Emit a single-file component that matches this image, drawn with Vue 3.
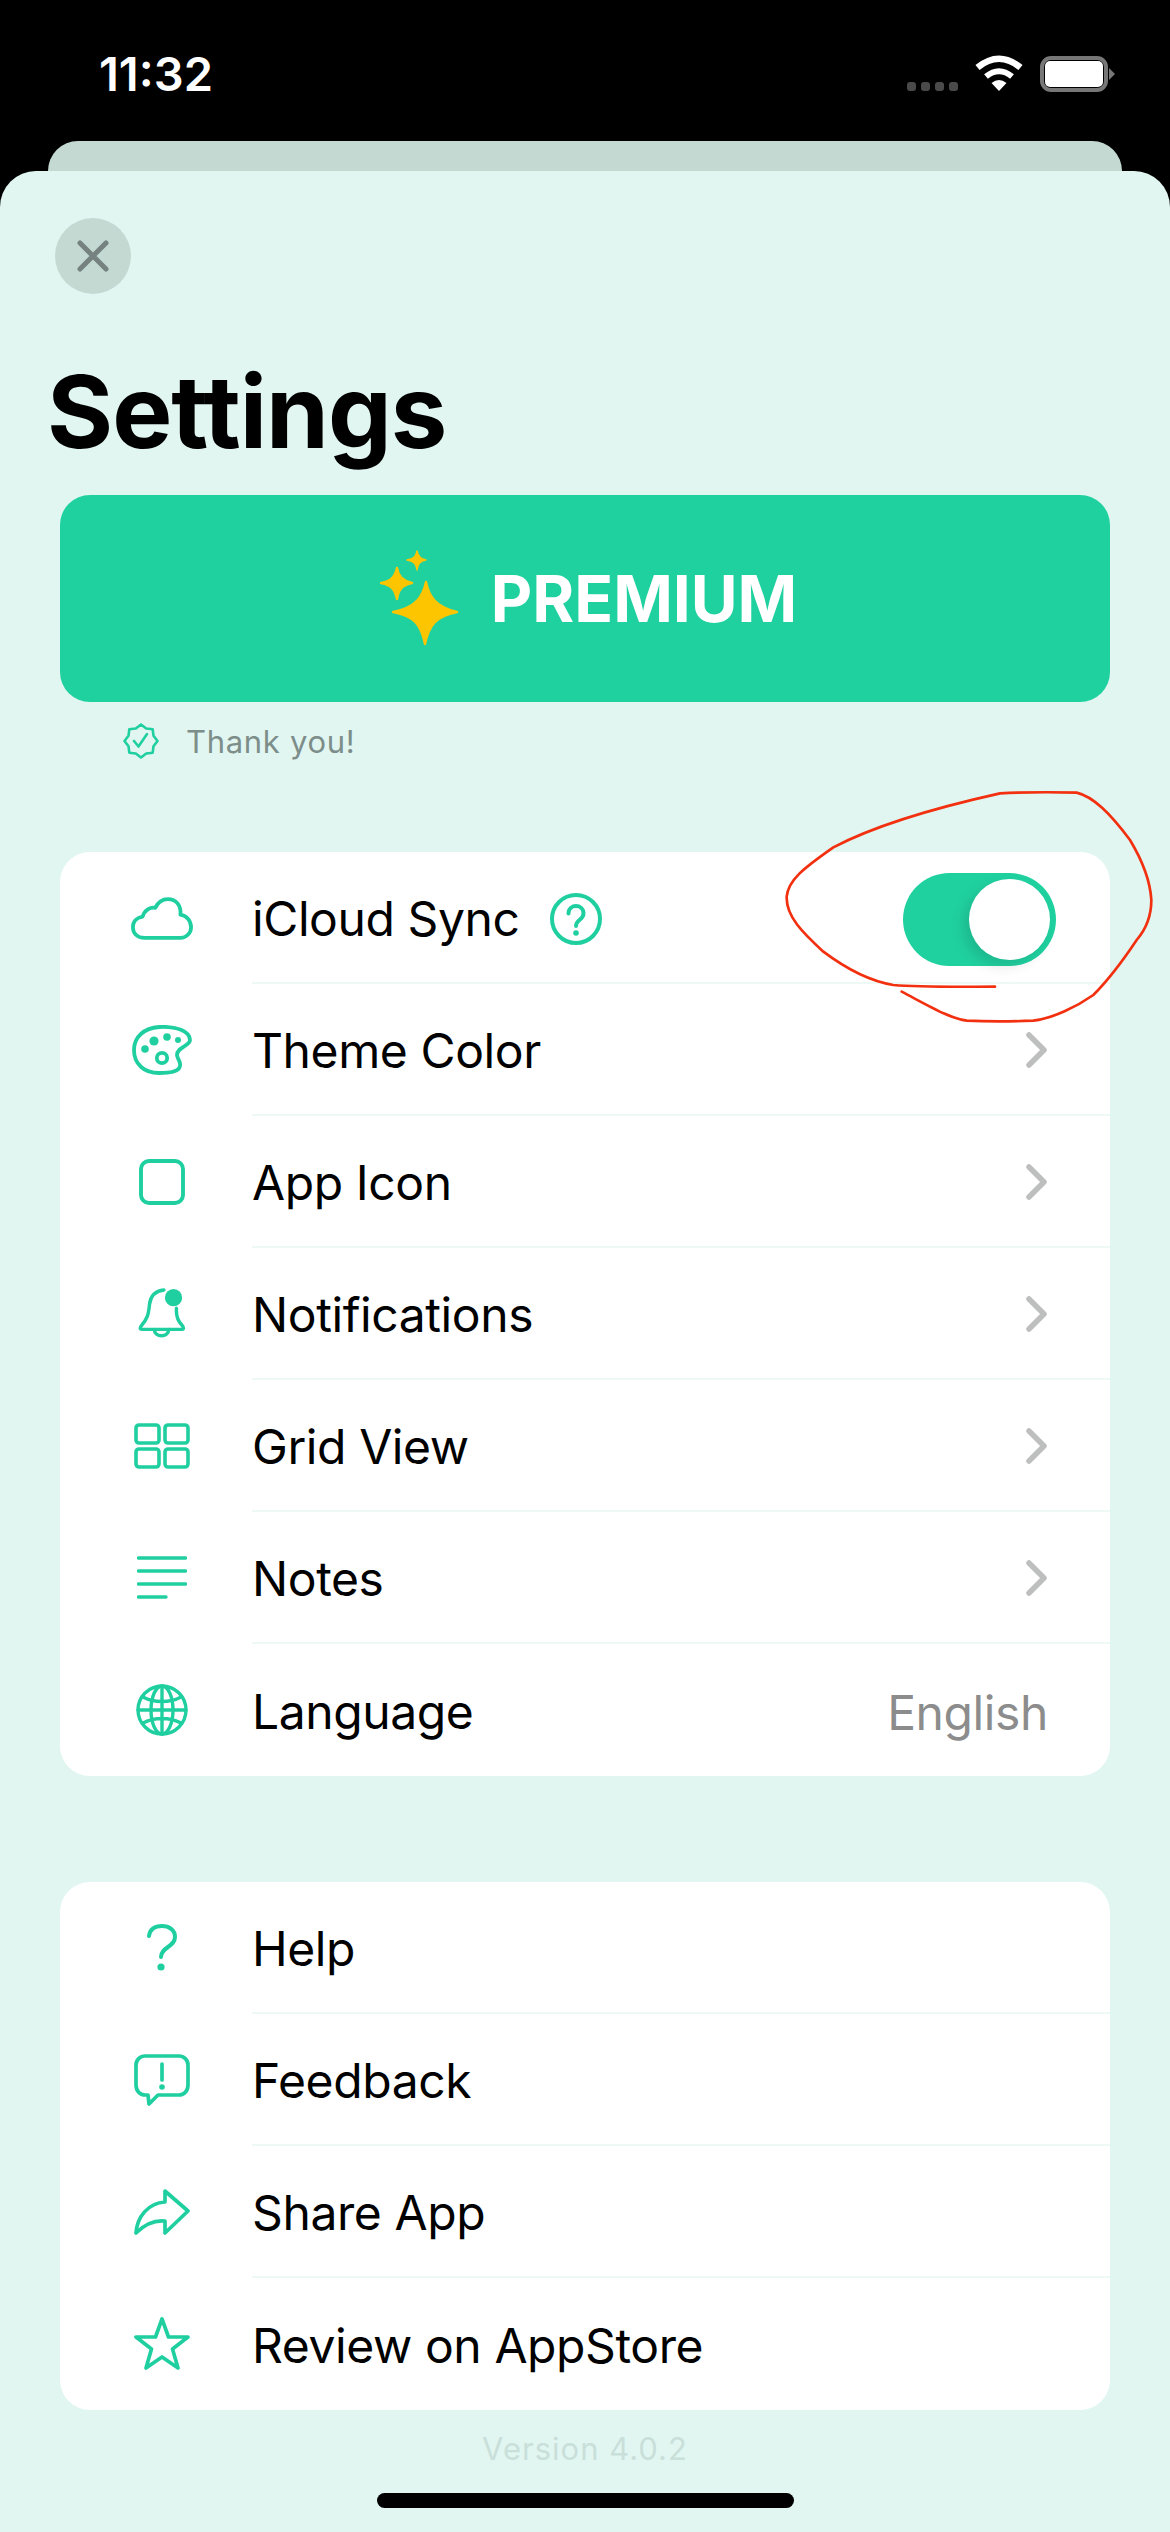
<template>
  <div class="phone">
    <div class="status-bar">
      <span class="clock">11:32</span>
      <div class="status-icons">
        <div class="signal"><i v-for="n in 4" :key="n"></i></div>
        <svg class="wifi" viewBox="0 0 48 36" fill="none">
          <path d="M2.5 12.5 Q24 -5 45.5 12.5" stroke="#fff" stroke-width="6.5" />
          <path d="M11 21.5 Q24 11 37 21.5" stroke="#fff" stroke-width="6" />
          <path d="M24 36 L16.5 28 Q24 22 31.5 28 Z" fill="#fff" />
        </svg>
        <div class="battery"><div class="battery-fill"></div></div>
      </div>
    </div>
    <div class="back-card"></div>

    <div class="sheet">
      <button class="close-btn">
        <svg viewBox="0 0 34 34" width="34" height="34">
          <path d="M4 4 L30 30 M30 4 L4 30" stroke="#75827f" stroke-width="5" stroke-linecap="round" fill="none" />
        </svg>
      </button>
      <h1 class="title">Settings</h1>

      <div class="premium">
        <svg class="sparkles" viewBox="0 0 84 98" fill="#fdc500" stroke="#fdc500" stroke-width="2.4" stroke-linejoin="round">
          <path d="M47 33 C50 48 57 58 78 63 C57 67 50 76 46 95 C42 76 36 67 14 63 C36 59 44 48 47 33 Z" />
          <path d="M18 19 C19 27 23 32 33 34 C23 36 19 41 18 50 C16 41 13 36 2 34 C13 32 16 27 18 19 Z" />
          <path d="M38 2 C39 7 41 10 47 11 C41 12 39 15 38 21 C37 15 35 12 28 11 C35 10 37 7 38 2 Z" stroke-width="1.4" />
        </svg>
        <span>PREMIUM</span>
      </div>

      <div class="thanks">
        <svg class="badge" viewBox="0 0 36 36" fill="none" stroke="#20cfa0" stroke-width="2.6" stroke-linejoin="round" stroke-linecap="round">
          <path d="M18 1.5 L23.2 5.5 L29.7 6.3 L30.5 12.8 L34.5 18 L30.5 23.2 L29.7 29.7 L23.2 30.5 L18 34.5 L12.8 30.5 L6.3 29.7 L5.5 23.2 L1.5 18 L5.5 12.8 L6.3 6.3 L12.8 5.5 Z" />
          <path d="M11 18 L15.5 23.5 L24 11" />
        </svg>
        <span>Thank you!</span>
      </div>

      <div class="card first">
        <div v-for="row in mainRows" :key="row.label" class="row">
          <div class="row-icon" v-html="row.icon"></div>
          <div class="row-body">
            <span class="row-label">{{ row.label }}</span>
            <svg v-if="row.help" class="help" viewBox="0 0 52 52" fill="none">
              <circle cx="26" cy="26" r="24" stroke="#20cfa0" stroke-width="4" />
              <path d="M18.5 20.5 C18.5 10.5 33.5 10.5 33.5 20.5 C33.5 27 26 26.5 26 33" stroke="#20cfa0" stroke-width="4" stroke-linecap="round" />
              <circle cx="26" cy="40" r="2.8" fill="#20cfa0" />
            </svg>
            <div v-if="row.toggle" class="toggle"><div class="knob"></div></div>
            <span v-else-if="row.value" class="row-value">{{ row.value }}</span>
            <svg v-else-if="row.chevron" class="chevron" viewBox="0 0 24 36" fill="none">
              <path d="M5 3 L20 18 L5 33" stroke="#bdbfbe" stroke-width="5.5" stroke-linecap="round" stroke-linejoin="round" />
            </svg>
          </div>
        </div>
      </div>

      <div class="card second">
        <div v-for="row in otherRows" :key="row.label" class="row">
          <div class="row-icon" v-html="row.icon"></div>
          <div class="row-body">
            <span class="row-label">{{ row.label }}</span>
          </div>
        </div>
      </div>

      <div class="version">Version 4.0.2</div>
      <div class="home-bar"></div>
    </div>

    <!-- hand drawn marker round the toggle -->
    <svg class="scribble" viewBox="0 0 1230 810" fill="none">
      <path d="M705 650 C600 650 480 652 400 645 C320 632 250 590 190 545 C130 490 78 440 80 380 C85 330 130 295 220 232 C300 190 450 130 720 70 C800 66 880 66 950 68 C1000 80 1050 130 1110 210 C1140 260 1170 320 1174 390 C1174 440 1160 475 1130 510 C1090 570 1050 625 1000 675 C950 710 880 745 820 752 C750 755 680 755 620 752 C570 745 520 715 425 665" stroke="#f2300f" stroke-width="8" stroke-linecap="round" stroke-linejoin="round" />
    </svg>
  </div>
</template>

<script setup>
const g = 'fill="none" stroke="#20cfa0" stroke-linecap="round" stroke-linejoin="round"'

const icons = {
  cloud: `<svg width="62" height="43" viewBox="0 0 64 44" ${g} stroke-width="3.9"><path d="M14 42 C6 42 2 37 2 31 C2 25 6 21 12 20 C14 13 20 10 25 11 C28 5 33 2 38 2 C47 2 52 9 51 18 C58 19 62 25 62 31 C62 37 57 42 51 42 Z"/></svg>`,
  palette: `<svg width="60" height="50" viewBox="0 0 60 50" ${g} stroke-width="3.8"><path d="M27 2 C44 1 58 6 58 15 C58 21 45 22 45 30 C45 34 49 36 48 41 C47 47 38 48 27 48 C12 48 2 39 2 25 C2 12 12 3 27 2 Z"/><circle cx="30" cy="33" r="5.2"/><circle cx="22" cy="16" r="4.6" fill="#20cfa0" stroke="none"/><circle cx="35" cy="12" r="3.8" fill="#20cfa0" stroke="none"/><circle cx="46" cy="15" r="3" fill="#20cfa0" stroke="none"/><circle cx="13" cy="24" r="3.8" fill="#20cfa0" stroke="none"/></svg>`,
  square: `<svg width="46" height="46" viewBox="0 0 46 46" ${g} stroke-width="3.9"><rect x="2" y="2" width="42" height="42" rx="8"/></svg>`,
  bell: `<svg width="48" height="52" viewBox="0 0 50 54" ${g} stroke-width="3.6"><path d="M27 2 C18 3 13 8 12 17 C11 27 10 32 3 40 C2 42 2 43 4 43 L45 43 C48 43 48 41 46 39 C41 34 40 28 40 24 L40 21"/><path d="M17 43 C17 52 32 52 32 43"/><circle cx="37" cy="10" r="9" fill="#20cfa0" stroke="none"/></svg>`,
  grid: `<svg width="56" height="46" viewBox="0 0 56 46" ${g} stroke-width="3.6"><rect x="2" y="2" width="23" height="18" rx="3"/><rect x="31" y="2" width="23" height="18" rx="3"/><rect x="2" y="26" width="23" height="18" rx="3"/><rect x="31" y="26" width="23" height="18" rx="3"/></svg>`,
  notes: `<svg width="50" height="44" viewBox="0 0 50 44" ${g} stroke-width="3.4"><path d="M1.5 2 H48.5 M1.5 15 H48.5 M1.5 28 H48.5 M1.5 41 H29"/></svg>`,
  globe: `<svg width="52" height="52" viewBox="0 0 52 52" ${g} stroke-width="3.4"><circle cx="26" cy="26" r="24"/><ellipse cx="26" cy="26" rx="11" ry="24"/><path d="M26 2 V50 M2 26 H50 M7 13 C18 19 34 19 45 13 M7 39 C18 33 34 33 45 39"/></svg>`,
  question: `<svg width="30" height="48" viewBox="0 0 30 48" ${g} stroke-width="4"><path d="M2 12 C3 5 8 2 15 2 C22 2 28 6 28 13 C28 23 14 23 14 33"/><circle cx="14" cy="43" r="3.6" fill="#20cfa0" stroke="none"/></svg>`,
  feedback: `<svg width="56" height="52" viewBox="0 0 56 52" ${g} stroke-width="3.7"><path d="M11 2 H45 C50 2 54 6 54 11 V31 C54 37 50 41 45 41 H24 L15 50 L14 41 H11 C6 41 2 37 2 31 V11 C2 6 6 2 11 2 Z"/><path d="M28 10 V26"/><circle cx="28" cy="33" r="2.8" fill="#20cfa0" stroke="none"/></svg>`,
  share: `<svg width="56" height="46" viewBox="0 0 56 46" ${g} stroke-width="3.7"><path d="M31 2 L54 22 L31 44 V32 C20 31 10 36 2 44 C3 28 14 14 31 13 Z"/></svg>`,
  star: `<svg width="56" height="54" viewBox="0 0 56 54" ${g} stroke-width="3.7"><path d="M28 2 L34.5 20 L54 20 L38.5 32 L44 51 L28 40 L12 51 L17.5 32 L2 20 L21.5 20 Z"/></svg>`
}

const mainRows = [
  { label: 'iCloud Sync', icon: icons.cloud, help: true, toggle: true },
  { label: 'Theme Color', icon: icons.palette, chevron: true },
  { label: 'App Icon', icon: icons.square, chevron: true },
  { label: 'Notifications', icon: icons.bell, chevron: true },
  { label: 'Grid View', icon: icons.grid, chevron: true },
  { label: 'Notes', icon: icons.notes, chevron: true },
  { label: 'Language', icon: icons.globe, value: 'English' }
]

const otherRows = [
  { label: 'Help', icon: icons.question },
  { label: 'Feedback', icon: icons.feedback },
  { label: 'Share App', icon: icons.share },
  { label: 'Review on AppStore', icon: icons.star }
]
</script>

<style>
html, body {
  margin: 0;
  background: #000;
}
</style>

<style scoped>
.phone {
  position: relative;
  width: 1170px;
  height: 2532px;
  overflow: hidden;
  background: #000;
  font-family: Inter, "Noto Sans", sans-serif;
  color: #000;
}

.status-bar {
  height: 141px;
  box-sizing: border-box;
  padding: 54px 62px 0 99px;
  display: flex;
  justify-content: space-between;
  align-items: flex-start;
}

.clock {
  margin-top: -1px;
  color: #fff;
  font-size: 47px;
  font-weight: 600;
  line-height: 42px;
}

.status-icons {
  display: flex;
  align-items: flex-end;
  gap: 17px;
  height: 38px;
}

.signal {
  display: flex;
  gap: 5px;
  margin-bottom: 1px;
}

.signal i {
  width: 9px;
  height: 9px;
  border-radius: 3px;
  background: #4a4a4a;
}

.wifi {
  width: 48px;
  height: 36px;
  margin-bottom: 1px;
}

.battery {
  position: relative;
  width: 68px;
  height: 36px;
  box-sizing: border-box;
  border: 4px solid #777;
  border-radius: 11px;
  padding: 1px;
}

.battery::after {
  content: "";
  position: absolute;
  right: -11px;
  top: 8px;
  border-left: 6px solid #777;
  border-top: 6px solid transparent;
  border-bottom: 6px solid transparent;
}

.battery-fill {
  height: 100%;
  background: #fff;
  border-radius: 5px;
}

.back-card {
  height: 40px;
  margin: 0 48px -10px;
  background: #c5d9d3;
  border-radius: 30px 30px 0 0;
}

.sheet {
  position: relative;
  height: 2361px;
  box-sizing: border-box;
  padding: 47px 60px 0;
  background: #e1f6f1;
  border-radius: 36px 36px 0 0;
}

.close-btn {
  display: flex;
  align-items: center;
  justify-content: center;
  width: 76px;
  height: 76px;
  margin: 0 0 0 -5px;
  padding: 0;
  border: none;
  border-radius: 50%;
  background: #c5d9d3;
}

.title {
  margin: 57px 0 0 -13px;
  font-size: 101px;
  font-weight: 700;
  line-height: 120px;
  letter-spacing: -1px;
}

.premium {
  height: 207px;
  margin-top: 24px;
  display: flex;
  align-items: center;
  justify-content: center;
  gap: 28px;
  background: #20d1a0;
  border-radius: 30px;
  color: #fff;
  font-size: 64px;
  font-weight: 700;
}

.sparkles {
  width: 84px;
  height: 98px;
  margin-left: 6px;
  margin-top: -2px;
}

.thanks {
  display: flex;
  align-items: center;
  gap: 27px;
  margin: 21px 0 0 63px;
  height: 36px;
  color: #7d8e8a;
  font-size: 31px;
  letter-spacing: 0.7px;
}

.badge {
  width: 36px;
  height: 36px;
}

.card {
  background: #fff;
  border-radius: 30px;
  overflow: hidden;
}

.card.first {
  margin-top: 93px;
}

.card.second {
  margin-top: 106px;
}

.row {
  display: flex;
  height: 132px;
}

.row-icon {
  flex: 0 0 192px;
  box-sizing: border-box;
  padding-left: 12px;
  display: flex;
  align-items: center;
  justify-content: center;
}

.row-body {
  flex: 1;
  min-width: 0;
  display: flex;
  align-items: center;
  gap: 30px;
  box-sizing: border-box;
  padding: 4px 62px 0 0;
  border-bottom: 2px solid #eef8f5;
}

.row:last-child .row-body {
  border-bottom: none;
}

.row-label {
  font-size: 48px;
  line-height: 60px;
  letter-spacing: -0.4px;
  flex: 0 0 auto;
}

.row-value {
  margin-left: auto;
  font-size: 48px;
  letter-spacing: -0.4px;
  color: #8c8c8c;
}

.chevron {
  margin-left: auto;
  margin-top: -2px;
  width: 24px;
  height: 36px;
}

.help {
  width: 52px;
  height: 52px;
}

.toggle {
  margin: 1px -8px 0 auto;
  width: 153px;
  height: 93px;
  box-sizing: border-box;
  padding: 6px;
  display: flex;
  justify-content: flex-end;
  border-radius: 47px;
  background: #20d1a0;
}

.knob {
  width: 81px;
  height: 81px;
  border-radius: 50%;
  background: #fff;
  box-shadow: -6px 6px 14px rgba(0, 0, 0, 0.12);
}

.version {
  margin-top: 20px;
  text-align: center;
  font-size: 31px;
  line-height: 38px;
  letter-spacing: 1px;
  color: #c9dfda;
}

.home-bar {
  position: absolute;
  left: 377px;
  top: 2322px;
  width: 417px;
  height: 15px;
  border-radius: 8px;
  background: #000;
}

.scribble {
  position: absolute;
  left: 760px;
  top: 770px;
  width: 410px;
  height: 270px;
  pointer-events: none;
}
</style>
